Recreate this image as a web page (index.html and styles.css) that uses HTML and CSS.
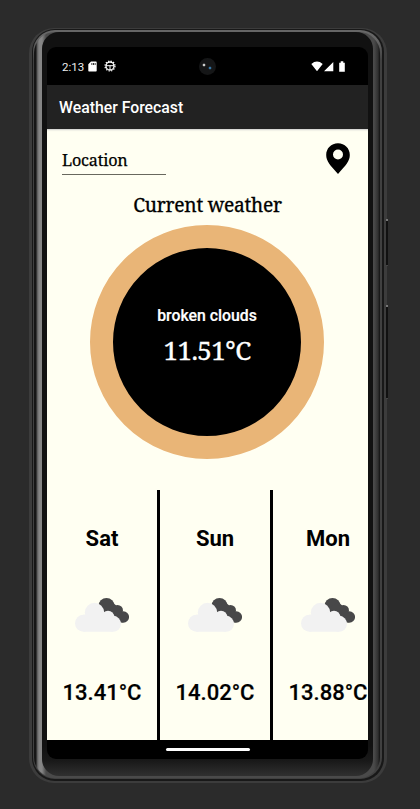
FILE: index.html
```html
<!DOCTYPE html>
<html lang="en">
<head>
<meta charset="utf-8">
<title>Weather Forecast</title>
<link rel="stylesheet" href="styles.css">
</head>
<body>
<svg class="defs" width="0" height="0" aria-hidden="true">
  <symbol id="clouds" viewBox="0 0 54 34">
    <g fill="#484849"><circle cx="31.500" cy="8" r="8"/><circle cx="42.500" cy="12.500" r="5.500"/><circle cx="48.300" cy="19" r="5.800"/><path d="M25 12 37 4 43 9 48 16 48 24.500 38 24Z"/></g>
    <g fill="#f2f2f2"><circle cx="8.500" cy="25.300" r="8.500"/><circle cx="19.500" cy="14.500" r="9.700"/><circle cx="33" cy="19" r="6.300"/><circle cx="38" cy="25.800" r="8"/><path d="M8.500 16.800 28 14 38 20V33.800H8.500Z"/></g>
  </symbol>
</svg>
<div class="phone">
  <i class="side-button power"></i><i class="side-button volume"></i>
  <div class="groove"><div class="rim"><div class="inner-rim"><div class="bezel">
    <main class="screen">
      <div class="status">
        <span class="time">2:13</span>
        <svg class="sd" viewBox="0 0 9 11"><path fill="#fff" fill-rule="evenodd" d="M3 .5h5q.7 0 .7.7v8.600q0 .7-.7.7H1q-.7 0-.7-.7V3.300zM3.500 2v2h.8V2zm1.600 0v2h.8V2zm1.600 0v2h.8V2z"/></svg>
        <svg class="gear" viewBox="0 0 12 12" fill="none" stroke="#fff"><circle cx="6" cy="6" r="4" stroke-width="1.300"/><circle cx="6" cy="6" r="5" stroke-width="1.200" stroke-dasharray="1.300 1.318"/><path d="M2 5.700h8M6 5.700V10"/></svg>
        <i class="camera"></i>
        <svg class="signals" viewBox="0 0 36 11" fill="#fff"><path d="M.3 3Q6 -1.800 11.700 3L6 10.200zM13 10.200 22.300 1v9.200zM28.200 1.700h1.500V.3h2.600v1.400h1.500v9h-5.600z"/></svg>
      </div>
      <header>Weather Forecast</header>
      <section class="content">
        <div class="search">
          <div class="field">Location</div>
          <svg class="pin" viewBox="0 0 24 32"><path fill-rule="evenodd" d="M12 .2C5.200.2.200 5.300.200 12 .2 18.200 4 22 12 31 20 22 23.800 18.200 23.800 12 23.800 5.300 18.800.2 12 .2ZM12 6.500a5 5 0 1 1 0 10 5 5 0 0 1 0-10Z"/></svg>
        </div>
        <h1>Current weather</h1>
        <div class="dial"><span class="condition">broken clouds</span><span class="temp">11.51°C</span></div>
        <div class="forecast">
          <article><h2>Sat</h2><svg><use href="#clouds"/></svg><p>13.41°C</p></article>
          <article><h2>Sun</h2><svg><use href="#clouds"/></svg><p>14.02°C</p></article>
          <article><h2>Mon</h2><svg><use href="#clouds"/></svg><p>13.88°C</p></article>
        </div>
      </section>
      <div class="nav"><i></i></div>
    </main>
  </div></div></div></div>
</div>
</body>
</html>
```
FILE: styles.css
```css
* { box-sizing: border-box; }
body { margin: 0; height: 809px; overflow: hidden; background: #2b2b2b; padding: 28px 0 0 29px; font-family: Roboto, sans-serif; }
.defs { position: absolute; }
svg { display: block; }
.phone { position: relative; width: 358px; height: 755px; border-radius: 25px; background: #3c3c3c; padding: 1px 3px 2px 3px; }
.side-button { position: absolute; left: 357px; width: 2px; background: #111; border-top: 2px solid #777; border-bottom: 1px solid #444; }
.power { top: 191px; height: 47px; }
.volume { top: 277px; height: 94px; }
.groove { height: 752px; border-radius: 23px; background: #181818; padding: 1px 2px 2px 1px; }
.rim { height: 749px; border-radius: 22px; background: linear-gradient(#666 0 10px, #404040 30px); padding: 2px 2px 1px 1px; }
.inner-rim { height: 746px; border-radius: 21px; background: linear-gradient(90deg, #151515 0 2px, #555 3px, #858585 5px 8px, #4a4a4a 12px, #4a4a4a calc(100% - 6px), #303030 calc(100% - 2px), #111 100%); padding: 0 7px 2px 8px; }
.bezel { height: 744px; border-radius: 17px; background: linear-gradient(#111 96%, #191919 98%, #303030); padding: 15px 4px 0 5px; }
.screen { width: 321px; height: 712px; border-radius: 9px; overflow: hidden; background: #000; color: #000; }
.status { position: relative; height: 38px; padding: 0 21px 0 15px; display: flex; align-items: center; color: #eee; }
.time { font-size: 11.500px; width: 26px; padding-top: 2px; }
.sd { width: 9px; height: 11px; }
.gear { width: 12px; height: 12px; margin-left: 7px; }
.signals { width: 36px; height: 11px; margin-left: auto; }
.camera { position: absolute; left: 152px; top: 11px; width: 17px; height: 17px; border-radius: 50%; background: radial-gradient(circle at 5px 7px, #ccc 0 .7px, transparent 1.800px), radial-gradient(circle at 11px 10px, #3475a5 0 .7px, transparent 1.800px), #151617; }
header { height: 44px; line-height: 45px; padding-left: 12px; background: #222; color: #fff; font-size: 15.800px; font-weight: 500; }
.content { height: 611px; background: #fffff2; box-shadow: inset 0 3px 2px -2px #ccc; overflow: hidden; }
.search { height: 60px; display: flex; justify-content: space-between; padding: 14px 18px 0 15px; }
.field { width: 104px; height: 32px; border-bottom: 1px solid #68685e; font: 16.200px/34px "Noto Serif", "DejaVu Serif Condensed", "DejaVu Serif", serif; font-stretch: condensed; letter-spacing: -.2px; -webkit-text-stroke: .25px #000; }
.pin { width: 24px; height: 32px; }
h1 { margin: 0; height: 36px; text-align: center; font: 400 19.200px/32px "Noto Serif", "DejaVu Serif Condensed", "DejaVu Serif", serif; font-stretch: condensed; letter-spacing: -.25px; -webkit-text-stroke: .3px #000; }
.dial { width: 234px; height: 234px; margin: 0 0 0 43px; border: 23.500px solid #e9b577; border-radius: 50%; background: #000; color: #fff; display: flex; flex-direction: column; align-items: center; padding-top: 58px; }
.condition { font-size: 15.800px; line-height: 20px; font-weight: 500; -webkit-text-stroke: .2px #fff; }
.temp { font: 26px/34px "Noto Serif", "DejaVu Serif Condensed", "DejaVu Serif", serif; font-stretch: condensed; letter-spacing: -.550px; -webkit-text-stroke: .35px #fff; margin-top: 7px; }
.forecast { display: flex; margin-top: 31px; width: 339px; height: 250px; }
article { flex: 0 0 113px; height: 250px; border-right: 3px solid #000; display: flex; flex-direction: column; align-items: center; }
h2 { margin: 35px 0 0; font-size: 22px; line-height: 28px; font-weight: 700; }
article svg { width: 54px; height: 34px; margin-top: 45px; }
article p { margin: 47px 0 0; font-size: 22px; line-height: 28px; font-weight: 500; -webkit-text-stroke: .2px #000; }
.nav { height: 19px; padding-top: 8px; }
.nav i { display: block; width: 84px; height: 3px; border-radius: 2px; background: #fff; margin: 0 auto; }
```
